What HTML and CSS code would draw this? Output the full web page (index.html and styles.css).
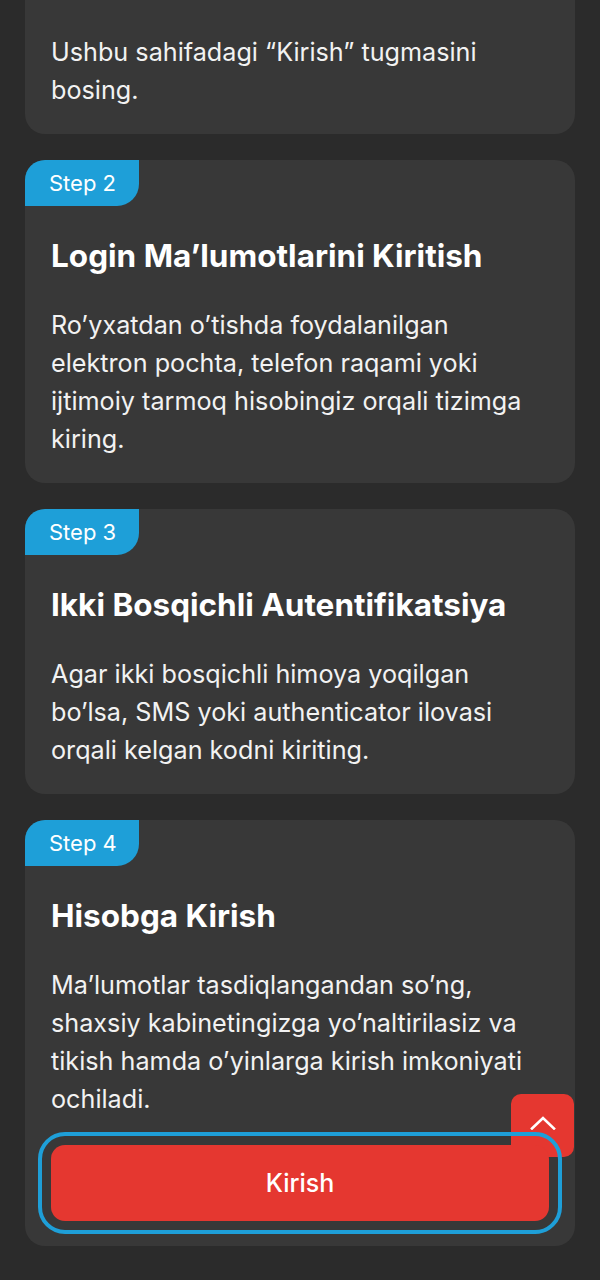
FILE: index.html
```html
<!DOCTYPE html>
<html lang="uz">
<head>
<meta charset="utf-8">
<title>Kirish</title>
<link rel="stylesheet" href="styles.css">
</head>
<body>
<main class="steps">
  <section class="card card-first">
    <div class="badge">Step 1</div>
    <h2 class="title">Kirish Sahifasi</h2>
    <p class="text">Ushbu sahifadagi “Kirish” tugmasini bosing.</p>
  </section>
  <section class="card">
    <div class="badge">Step 2</div>
    <h2 class="title">Login Ma’lumotlarini Kiritish</h2>
    <p class="text">Ro’yxatdan o’tishda foydalanilgan elektron pochta, telefon raqami yoki ijtimoiy tarmoq hisobingiz orqali tizimga kiring.</p>
  </section>
  <section class="card">
    <div class="badge">Step 3</div>
    <h2 class="title">Ikki Bosqichli Autentifikatsiya</h2>
    <p class="text">Agar ikki bosqichli himoya yoqilgan bo’lsa, SMS yoki authenticator ilovasi orqali kelgan kodni kiriting.</p>
  </section>
  <section class="card">
    <div class="badge">Step 4</div>
    <h2 class="title">Hisobga Kirish</h2>
    <p class="text">Ma’lumotlar tasdiqlangandan so’ng, shaxsiy kabinetingizga yo’naltirilasiz va tikish hamda o’yinlarga kirish imkoniyati ochiladi.</p>
    <button class="login-btn" type="button">Kirish</button>
  </section>
</main>
<a class="to-top" href="#" aria-label="Yuqoriga">
  <svg width="26" height="14" viewBox="0 0 26 14"><path d="M2 12.5 L13 2 L24 12.5" fill="none" stroke="#ffffff" stroke-width="2.6" stroke-linecap="square"/></svg>
</a>
</body>
</html>
```

FILE: styles.css
```css
html, body {
  margin: 0;
  padding: 0;
  background: #2b2b2b;
}
body {
  font-family: Inter, "Noto Sans", sans-serif;
  color: #f5f5f5;
  height: 1280px;
  overflow: hidden;
}
.steps {
  display: flex;
  flex-direction: column;
  gap: 26px;
  padding: 0 25px;
}
.card {
  background: #383838;
  border-radius: 20px;
  padding: 0 26px 25px;
  display: flex;
  flex-direction: column;
  align-items: flex-start;
}
.card-first {
  margin-top: -113px;
}
.badge {
  margin-left: -26px;
  height: 46px;
  width: 114px;
  box-sizing: border-box;
  padding-left: 24px;
  display: flex;
  align-items: center;
  background: #1e9fd8;
  color: #ffffff;
  font-size: 22px;
  border-radius: 20px 0 22px 0;
}
.title {
  margin: 32px 0 32px;
  font-size: 31.5px;
  line-height: 36px;
  font-weight: 700;
  color: #ffffff;
}
.text {
  margin: 0;
  font-size: 25.2px;
  line-height: 38px;
  color: #f2f2f2;
}
.login-btn {
  position: relative;
  z-index: 2;
  margin-top: 27px;
  align-self: stretch;
  height: 76px;
  border: none;
  border-radius: 14px;
  background: #e53730;
  color: #ffffff;
  font-family: Inter, "Noto Sans", sans-serif;
  font-size: 25px;
  font-weight: 500;
  outline: 4px solid #1e9fd8;
  outline-offset: 9px;
}
.to-top {
  position: fixed;
  z-index: 1;
  left: 511px;
  top: 1094px;
  width: 63px;
  height: 63px;
  border-radius: 10px;
  background: #e53730;
  display: flex;
  justify-content: center;
  align-items: flex-start;
  padding-top: 22px;
  box-sizing: border-box;
}
.to-top svg {
  display: block;
}
```
